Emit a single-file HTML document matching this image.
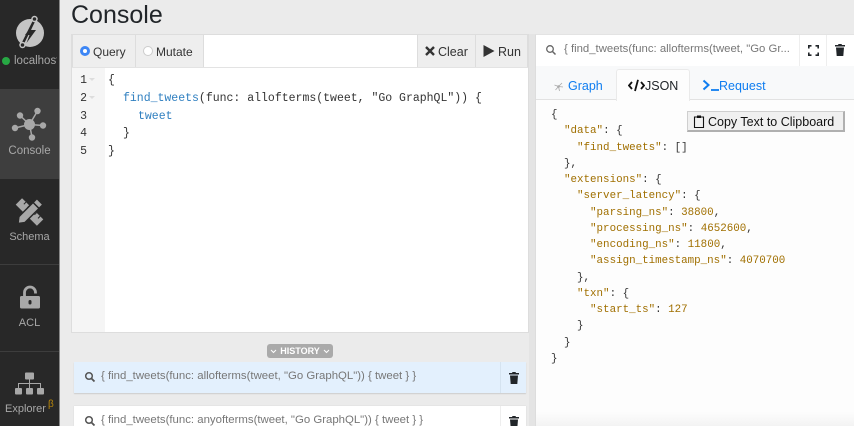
<!DOCTYPE html>
<html><head><meta charset="utf-8"><style>
html,body{margin:0;padding:0;width:854px;height:426px;overflow:hidden;background:#ebebeb;font-family:"Liberation Sans",sans-serif}
#r{position:absolute;left:0;top:0;width:854px;height:426px;overflow:hidden}
.a{position:absolute;white-space:pre}
.m{font-family:"Liberation Mono",monospace}
.nav{color:#a8a8a8;font-size:11px;text-align:center;left:0;width:59px}
.sep{position:absolute;left:0;width:59px;height:1px;background:#3d3d3d}
.gut{color:#333;font-size:11.5px;width:14px;text-align:right;left:73px}
.c{font-size:11.5px;color:#333;left:108px}
.j{font-size:10.85px;color:#333;left:551px;line-height:16.27px}
.k{color:#a06f00}
.b{color:#2f7fc0}
.btn{position:absolute;background:#eeeeee;box-sizing:border-box;border-left:1px solid #ddd;border-right:1px solid #ddd}
</style></head><body><div id="r">
<div class="a" style="left:0;top:0;width:59px;height:426px;background:#282828"></div>
<div class="a" style="left:59px;top:0;width:1px;height:426px;background:#888"></div>
<div class="a" style="left:0;top:89px;width:59px;height:90px;background:#3e3e3e"></div>
<div class="sep" style="top:264px"></div><div class="sep" style="top:351px"></div>

<svg class="a" style="left:0;top:0" width="60" height="426" viewBox="0 0 60 426">
<circle cx="30" cy="33" r="14" fill="#c4c4c4"/>
<path d="M22 45 L35 19" stroke="#282828" stroke-width="2.500"/>
<circle cx="34.500" cy="19" r="2.500" fill="#282828" stroke="#c4c4c4" stroke-width="1.500"/>
<circle cx="22.500" cy="45" r="2.500" fill="#282828" stroke="#c4c4c4" stroke-width="1.500"/>
<path d="M34 23 L25 35 L29.500 35 L26.500 43 L36 30 L31 30 Z" fill="#282828"/>
<g stroke="#a8a8a8" stroke-width="1.500"><path d="M29.500 124.500 L37.500 111 M29.500 124.500 L20 115.500 M29.500 124.500 L15 128 M29.500 124.500 L43 125.500 M29.500 124.500 L32 137"/></g>
<g fill="#a8a8a8"><circle cx="29.500" cy="124.500" r="5.500"/><circle cx="37.500" cy="111" r="3.200"/><circle cx="20" cy="115.500" r="3.200"/><circle cx="15" cy="128" r="3.200"/><circle cx="43" cy="125.500" r="3.200"/><circle cx="32" cy="137.500" r="3.200"/></g>
<g transform="rotate(45 29.500 212)">
<rect x="14.500" y="207.500" width="30" height="9" fill="#a8a8a8"/>
<path d="M20 207.500 v3 M25 207.500 v3 M35 207.500 v3 M40 207.500 v3" stroke="#282828" stroke-width="1"/>
</g>
<g transform="rotate(-45 29.500 212)">
<path d="M13 212 L18 207 H44 A1 1 0 0 1 45 208 V216 A1 1 0 0 1 44 217 H18 Z" fill="#282828"/>
<path d="M14.500 212 L19 208.500 H38 V215.500 H19 Z M39.500 208.500 H43.500 V215.500 H39.500 Z" fill="#a8a8a8"/>
</g>
<rect x="20" y="296" width="20" height="12.500" rx="1.500" fill="#a8a8a8"/>
<path d="M24.500 296 V292.500 A5.500 5.500 0 0 1 35.500 292.500 V293.500" fill="none" stroke="#a8a8a8" stroke-width="2.800"/>
<rect x="28.500" y="300" width="3" height="4.500" rx="1.500" fill="#282828"/>
<g fill="#a8a8a8"><rect x="25" y="372.500" width="9" height="7" rx="1"/><rect x="15" y="388" width="7" height="6.500" rx="1"/><rect x="26" y="388" width="7" height="6.500" rx="1"/><rect x="37" y="388" width="7" height="6.500" rx="1"/></g>
<path d="M29.500 379 V388 M18.500 388 V383.500 H40.500 V388" fill="none" stroke="#a8a8a8" stroke-width="1"/>
</svg>
<div class="a" style="left:2px;top:57px;width:8px;height:8px;border-radius:50%;background:#27a844"></div>
<div class="a" style="left:14px;top:55px;width:43px;overflow:hidden;color:#a8a8a8;font-size:11.500px">localhost</div>
<div class="a nav" style="top:145px;font-size:11.500px">Console</div>
<div class="a nav" style="top:231px">Schema</div>
<div class="a nav" style="top:317px">ACL</div>
<div class="a nav" style="top:403px;left:5px;width:auto">Explorer</div>
<div class="a" style="left:48px;top:399px;color:#b8860b;font-size:10px">β</div>

<div class="a" style="left:71px;top:1px;font-size:25px;color:#212529;line-height:29px">Console</div>

<!-- editor -->
<div class="a" style="left:71px;top:34px;width:458px;height:299px;box-sizing:border-box;border:1px solid #ddd;background:#fff"></div>
<div class="a" style="left:72px;top:35px;width:456px;height:32px;background:#fff;border-bottom:1px solid #e3e3e3"></div>
<div class="btn" style="left:72px;top:35px;width:64px;height:32px"></div>
<div class="btn" style="left:136px;top:35px;width:68px;height:32px;border-left:0"></div>
<div class="btn" style="left:417px;top:35px;width:59px;height:32px"></div>
<div class="btn" style="left:475px;top:35px;width:53px;height:32px"></div>
<div class="a" style="left:80px;top:46px;width:10px;height:10px;border-radius:50%;background:#fff;border:3px solid #3d86f5;box-sizing:border-box"></div>
<div class="a" style="left:143px;top:46px;width:10px;height:10px;border-radius:50%;background:#fff;border:1px solid #ccc;box-sizing:border-box"></div>
<div class="a" style="left:93px;top:45px;font-size:12px;color:#333">Query</div>
<div class="a" style="left:156px;top:45px;font-size:12px;color:#333">Mutate</div>
<svg class="a" style="left:424px;top:45px" width="12" height="12" viewBox="0 0 12 12"><path d="M2 2 L10 10 M10 2 L2 10" stroke="#333" stroke-width="2.400"/></svg>
<div class="a" style="left:438px;top:45px;font-size:12.500px;color:#333">Clear</div>
<svg class="a" style="left:483px;top:44px" width="12" height="14" viewBox="0 0 12 14"><path d="M0.500 1 L11.500 7 L0.500 13 Z" fill="#333"/></svg>
<div class="a" style="left:498px;top:45px;font-size:12.500px;color:#333">Run</div>
<div class="a" style="left:72px;top:68px;width:33px;height:264px;background:#f5f5f5"></div>
<div class="a m gut" style="top:74px">1</div><div class="a m gut" style="top:92px">2</div><div class="a m gut" style="top:110px">3</div><div class="a m gut" style="top:127px">4</div><div class="a m gut" style="top:145px">5</div>
<div class="a" style="left:89px;top:78px;border:3px solid transparent;border-top:3px solid #ddd"></div>
<div class="a" style="left:89px;top:96px;border:3px solid transparent;border-top:3px solid #ddd"></div>
<div class="a m c" style="top:74px">{</div>
<div class="a m c" style="top:92px;left:123px"><span class="b">find_tweets</span>(func: allofterms(tweet, "Go GraphQL")) {</div>
<div class="a m c b" style="top:110px;left:138px">tweet</div>
<div class="a m c" style="top:127px;left:123px">}</div>
<div class="a m c" style="top:145px">}</div>

<!-- history -->
<div class="a" style="left:267px;top:344px;width:66px;height:14px;background:#aaa;border-radius:3px;color:#fff;font-size:9px;font-weight:bold;line-height:14px;text-align:center">HISTORY</div>
<svg class="a" style="left:270px;top:348px" width="60" height="7" viewBox="0 0 60 7"><path d="M1 2 L3.500 4.500 L6 2 M54 2 L56.500 4.500 L59 2" fill="none" stroke="#fff" stroke-width="1"/></svg>
<div class="a" style="left:74px;top:362px;width:452px;height:31px;background:#e3f0fd;box-shadow:0 1px 1px #ccc"></div>
<div class="a" style="left:500px;top:362px;width:1px;height:31px;background:#d5e3f0"></div>
<div class="a" style="left:74px;top:406px;width:452px;height:20px;background:#fff;box-shadow:0 0 1px #ccc"></div>
<div class="a" style="left:500px;top:406px;width:1px;height:20px;background:#eee"></div>
<div class="a" style="left:101px;top:370px;font-size:11.400px;color:#777">{ find_tweets(func: allofterms(tweet, "Go GraphQL")) { tweet } }</div>
<div class="a" style="left:101px;top:414px;font-size:11.400px;color:#777">{ find_tweets(func: anyofterms(tweet, "Go GraphQL")) { tweet } }</div>
<svg class="a" style="left:84px;top:371px" width="12" height="12" viewBox="0 0 12 12"><circle cx="5" cy="5" r="3.300" fill="none" stroke="#555" stroke-width="1.500"/><path d="M7.500 7.500 L10.500 10.500" stroke="#555" stroke-width="1.800"/></svg>
<svg class="a" style="left:84px;top:415px" width="12" height="12" viewBox="0 0 12 12"><circle cx="5" cy="5" r="3.300" fill="none" stroke="#555" stroke-width="1.500"/><path d="M7.500 7.500 L10.500 10.500" stroke="#555" stroke-width="1.800"/></svg>
<svg class="a" style="left:508px;top:371px" width="12" height="14" viewBox="0 0 12 14"><path d="M1 2 H4 L4.500 1 H7.500 L8 2 H11 V3.500 H1 Z M2 4.500 H10 L9.300 13 H2.700 Z" fill="#212529"/></svg>
<svg class="a" style="left:508px;top:415px" width="12" height="14" viewBox="0 0 12 14"><path d="M1 2 H4 L4.500 1 H7.500 L8 2 H11 V3.500 H1 Z M2 4.500 H10 L9.300 13 H2.700 Z" fill="#212529"/></svg>

<!-- right -->
<div class="a" style="left:535px;top:34px;width:319px;height:392px;background:#fdfdfd;border-left:1px solid #ddd;border-top:1px solid #e3e3e3;box-sizing:border-box"></div>
<div class="a" style="left:529px;top:34px;width:6px;height:392px;background:#e4e4e4"></div>
<div class="a" style="left:536px;top:35px;width:318px;height:31px;background:#fff;border-bottom:1px solid #e6e6e6"></div>
<div class="a" style="left:799px;top:35px;width:1px;height:31px;background:#eee"></div>
<div class="a" style="left:826px;top:35px;width:1px;height:31px;background:#eee"></div>
<svg class="a" style="left:545px;top:44px" width="12" height="12" viewBox="0 0 12 12"><circle cx="5" cy="5" r="3.300" fill="none" stroke="#666" stroke-width="1.300"/><path d="M7.500 7.500 L10.500 10.500" stroke="#666" stroke-width="1.500"/></svg>
<div class="a" style="left:564px;top:43px;font-size:11.350px;color:#777">{ find_tweets(func: allofterms(tweet, "Go Gr...</div>
<svg class="a" style="left:808px;top:45px" width="11" height="11" viewBox="0 0 11 11"><path d="M.8 3.500 V.8 H3.500 M7.500 .8 H10.200 V3.500 M10.200 7.500 V10.200 H7.500 M3.500 10.200 H.8 V7.500" fill="none" stroke="#212529" stroke-width="1.600"/></svg>
<svg class="a" style="left:834px;top:43px" width="12" height="14" viewBox="0 0 12 14"><path d="M1 2 H4 L4.500 1 H7.500 L8 2 H11 V3.500 H1 Z M2 4.500 H10 L9.300 13 H2.700 Z" fill="#212529"/></svg>
<div class="a" style="left:536px;top:66px;width:318px;height:34px;background:#f8f9fa;border-bottom:1px solid #e2e2e2;box-sizing:border-box"></div>
<div class="a" style="left:616px;top:69px;width:74px;height:32px;background:#fdfdfd;border:1px solid #eaeaea;border-bottom:0;border-radius:3px 3px 0 0;box-sizing:border-box"></div>
<svg class="a" style="left:553px;top:81px" width="11" height="11" viewBox="0 0 11 11"><path d="M5.500 5.500 L1.500 4 M5.500 5.500 L9 2 M5.500 5.500 L2.500 9 M5.500 5.500 L6.500 10 M5.500 5.500 L10 6" stroke="#aaa" stroke-width=".8"/><circle cx="5.500" cy="5.500" r="1.300" fill="#aaa"/></svg>
<div class="a" style="left:568px;top:79px;font-size:12.500px;color:#0f7df0">Graph</div>
<svg class="a" style="left:628px;top:79px" width="17" height="13" viewBox="0 0 17 13"><path d="M4 3 L1 6.500 L4 10 M13 3 L16 6.500 L13 10 M10 .8 L7 12" fill="none" stroke="#111" stroke-width="1.800"/></svg>
<div class="a" style="left:645px;top:79px;font-size:12.500px;color:#212529">JSON</div>
<svg class="a" style="left:702px;top:79px" width="18" height="13" viewBox="0 0 18 13"><path d="M1.500 1.500 L6.500 6 L1.500 10.500" fill="none" stroke="#0f7df0" stroke-width="2"/><path d="M9 11 H17" stroke="#0f7df0" stroke-width="1.800"/></svg>
<div class="a" style="left:719px;top:79px;font-size:12.500px;color:#0f7df0">Request</div>

<div class="a m j" style="top:107px;">{
  <span class="k">"data"</span>: {
    <span class="k">"find_tweets"</span>: []
  },
  <span class="k">"extensions"</span>: {
    <span class="k">"server_latency"</span>: {
      <span class="k">"parsing_ns"</span>: <span class="k">38800</span>,
      <span class="k">"processing_ns"</span>: <span class="k">4652600</span>,
      <span class="k">"encoding_ns"</span>: <span class="k">11800</span>,
      <span class="k">"assign_timestamp_ns"</span>: <span class="k">4070700</span>
    },
    <span class="k">"txn"</span>: {
      <span class="k">"start_ts"</span>: <span class="k">127</span>
    }
  }
}</div>
<div class="a" style="left:687px;top:111px;width:158px;height:21px;box-sizing:border-box;background:#f0f0f0;border:1px solid #cfcfcf;border-bottom:2px solid #b0b0b0;border-right:2px solid #b0b0b0;font-size:12.500px;color:#111;line-height:20px;padding-left:20px">Copy Text to Clipboard</div>
<svg class="a" style="left:693px;top:114px" width="12" height="15" viewBox="0 0 12 15"><path d="M1.500 3 H10.500 V13.500 H1.500 Z" fill="none" stroke="#111" stroke-width="1.100"/><rect x="4" y="1.500" width="4" height="2.500" fill="#111"/></svg>
<div class="a" style="left:536px;top:412px;width:318px;height:14px;background:linear-gradient(#fdfdfd,#f3f3f3)"></div>
</div></body></html>
